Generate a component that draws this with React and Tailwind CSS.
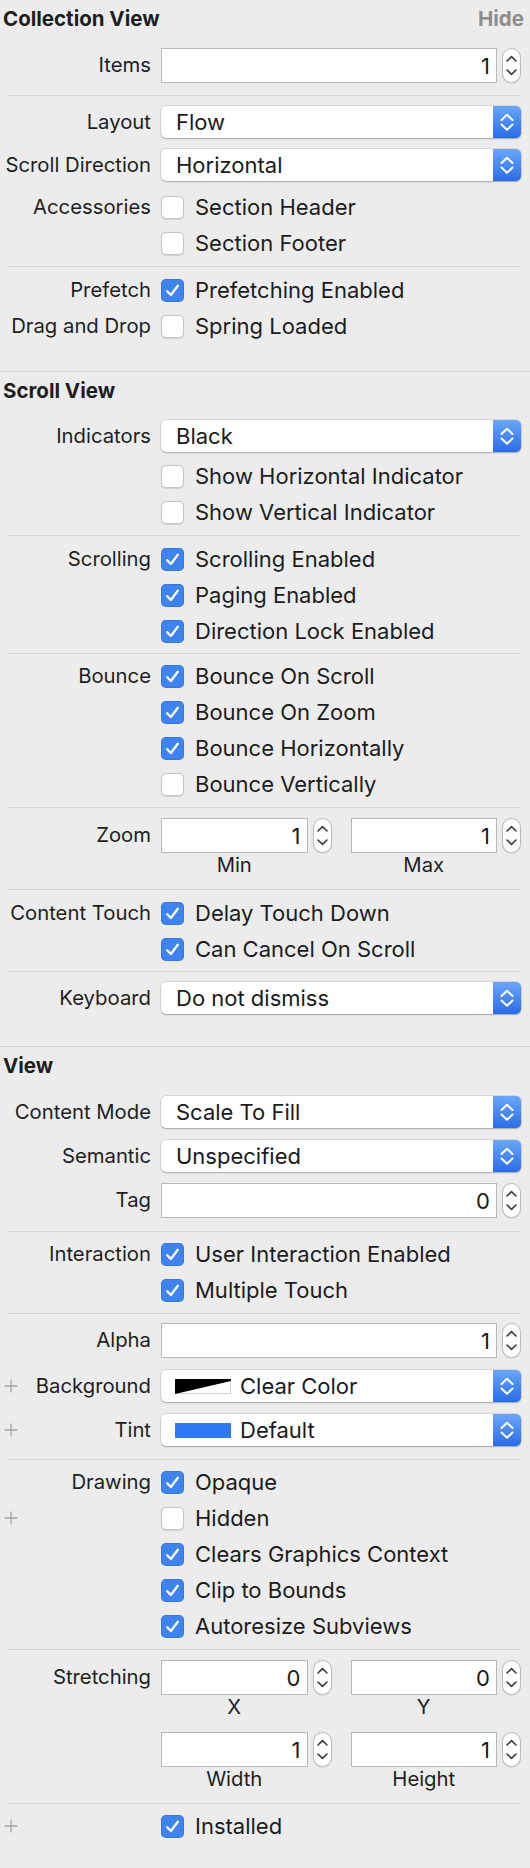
import React from "react";

const FONT = "font-['Inter','Liberation_Sans',sans-serif]";

function Check() {
  return (
    <svg width="23" height="23" viewBox="0 0 23 23" className="block">
      <path d="M6.2 12.2 L9.9 16 L16.8 6.8" fill="none" stroke="#ffffff" strokeWidth="2.3" strokeLinecap="round" strokeLinejoin="round" />
    </svg>
  );
}

function Checkbox({ checked }) {
  return checked ? (
    <div className="w-[23px] h-[23px] rounded-[5px] bg-[#3f83ef] shrink-0 shadow-[inset_0_0_0_0.5px_rgba(0,60,170,0.35)]">
      <Check />
    </div>
  ) : (
    <div className="w-[23px] h-[23px] rounded-[5px] bg-white border border-[#c6c6c6] shrink-0 shadow-[0_0.5px_1px_rgba(0,0,0,0.12)]" />
  );
}

function Plus() {
  return (
    <svg width="14" height="14" viewBox="0 0 14 14" className="block shrink-0">
      <path d="M7 0.5 V13.5 M0.5 7 H13.5" stroke="#a3a3a3" strokeWidth="1.3" />
    </svg>
  );
}

function Label({ children, plus }) {
  return (
    <div className="w-[151px] shrink-0 flex items-center">
      {plus ? (
        <div className="ml-[4px]">
          <Plus />
        </div>
      ) : null}
      <div className="flex-1 text-right text-[20.3px] leading-none text-[#1e1e1e] whitespace-nowrap">{children}</div>
    </div>
  );
}

function Sep({ className = "" }) {
  return <div className={"h-px bg-[#d4d4d4] ml-[8px] mr-[10px] " + className} />;
}

function FullSep({ className = "" }) {
  return <div className={"h-px bg-[#d2d2d2] " + className} />;
}

function Title({ children, hide }) {
  return (
    <div className="h-[38px] flex items-center justify-between pl-[3px] pr-[6px]">
      <span className="text-[20.5px] font-bold text-[#1e1e1e] leading-none">{children}</span>
      {hide ? <span className="text-[20.5px] font-bold text-[#8d8d8d] leading-none">Hide</span> : null}
    </div>
  );
}

function CheckRow({ label, plus, checked, text, className = "" }) {
  return (
    <div className={"h-[36px] flex items-center " + className}>
      <Label plus={plus}>{label}</Label>
      <div className="ml-[10px] flex items-center">
        <Checkbox checked={checked} />
        <span className="ml-[11px] text-[22px] leading-none text-[#1c1c1c] whitespace-nowrap">{text}</span>
      </div>
    </div>
  );
}

function PopupArrows() {
  return (
    <svg width="28" height="32" viewBox="0 0 28 32" className="block">
      <path d="M8.5 14 L14 8.8 L19.5 14" fill="none" stroke="#ffffff" strokeWidth="2" strokeLinecap="round" strokeLinejoin="round" />
      <path d="M8.5 18.5 L14 23.7 L19.5 18.5" fill="none" stroke="#ffffff" strokeWidth="2" strokeLinecap="round" strokeLinejoin="round" />
    </svg>
  );
}

function Popup({ children }) {
  return (
    <div className="h-[32px] flex-1 flex rounded-[5px] bg-white overflow-hidden shadow-[0_0_0_0.5px_rgba(0,0,0,0.18),0_1px_1.5px_rgba(0,0,0,0.22)]">
      <div className="flex-1 flex items-center pl-[15px] text-[22px] leading-none text-[#1a1a1a] whitespace-nowrap">{children}</div>
      <div className="w-[28px] h-full bg-linear-to-b from-[#6aa7fa] to-[#2a6ce5]">
        <PopupArrows />
      </div>
    </div>
  );
}

function PopupRow({ label, plus, children, className = "" }) {
  return (
    <div className={"flex items-center pr-[9px] " + className}>
      <Label plus={plus}>{label}</Label>
      <div className="ml-[10px] flex-1 flex">
        <Popup>{children}</Popup>
      </div>
    </div>
  );
}

function Stepper() {
  return (
    <div className="w-[19px] h-[35px] ml-[5px] shrink-0 rounded-full bg-white border border-[#bdbdbd] shadow-[0_0.5px_1px_rgba(0,0,0,0.15)]">
      <svg width="17" height="33" viewBox="0 0 17 33" className="block">
        <path d="M4 12 L8.5 7.6 L13 12" fill="none" stroke="#3a3a3a" strokeWidth="1.6" strokeLinecap="round" strokeLinejoin="round" />
        <path d="M4 21 L8.5 25.4 L13 21" fill="none" stroke="#3a3a3a" strokeWidth="1.6" strokeLinecap="round" strokeLinejoin="round" />
      </svg>
    </div>
  );
}

function NumField({ value }) {
  return (
    <div className="flex-1 flex items-center">
      <div className="flex-1 h-[35px] bg-white border border-[#b8b8b8] flex items-center justify-end pr-[6px] text-[22px] leading-none text-[#1a1a1a]">
        {value}
      </div>
      <Stepper />
    </div>
  );
}

function InputRow({ label, value, className = "" }) {
  return (
    <div className={"flex items-center pr-[9px] " + className}>
      <Label>{label}</Label>
      <div className="ml-[10px] flex-1 flex">
        <NumField value={value} />
      </div>
    </div>
  );
}

function DualRow({ label, a, b, la, lb, className = "" }) {
  return (
    <div className={"flex pr-[9px] " + className}>
      <div className="h-[35px] flex items-center">
        <Label>{label}</Label>
      </div>
      <div className="ml-[10px] flex-1 grid grid-cols-2 gap-x-[19px]">
        <div>
          <NumField value={a} />
          <div className="h-[25px] flex items-center justify-center pr-[24px] text-[20.3px] leading-none text-[#1e1e1e]">{la}</div>
        </div>
        <div>
          <NumField value={b} />
          <div className="h-[25px] flex items-center justify-center pr-[24px] text-[20.3px] leading-none text-[#1e1e1e]">{lb}</div>
        </div>
      </div>
    </div>
  );
}

function ClearSwatch() {
  return (
    <svg width="56" height="15" viewBox="0 0 56 15" className="block shrink-0">
      <rect x="0.5" y="0.5" width="55" height="14" fill="#ffffff" stroke="#d0d0d0" strokeWidth="1" />
      <polygon points="0,0 56,0 56,2 0,15" fill="#000000" />
    </svg>
  );
}

function TintSwatch() {
  return <div className="w-[56px] h-[15px] shrink-0 bg-[#2f7af4]" />;
}

export default function App() {
  return (
    <div className={"w-[530px] min-h-[1868px] bg-[#ececec] " + FONT}>
      {/* Collection View */}
      <Title hide>Collection View</Title>
      <InputRow label="Items" value="1" className="mt-[10px]" />
      <Sep className="mt-[12px]" />
      <PopupRow label="Layout" className="mt-[10px]">Flow</PopupRow>
      <PopupRow label="Scroll Direction" className="mt-[11px]">Horizontal</PopupRow>
      <CheckRow label="Accessories" text="Section Header" className="mt-[8px]" />
      <CheckRow label="" text="Section Footer" />
      <Sep className="mt-[5px]" />
      <CheckRow label="Prefetch" checked text="Prefetching Enabled" className="mt-[5px]" />
      <CheckRow label="Drag and Drop" text="Spring Loaded" />
      <FullSep className="mt-[27px]" />

      {/* Scroll View */}
      <Title>Scroll View</Title>
      <PopupRow label="Indicators" className="mt-[10px]">Black</PopupRow>
      <CheckRow label="" text="Show Horizontal Indicator" className="mt-[6px]" />
      <CheckRow label="" text="Show Vertical Indicator" />
      <Sep className="mt-[5px]" />
      <CheckRow label="Scrolling" checked text="Scrolling Enabled" className="mt-[5px]" />
      <CheckRow label="" checked text="Paging Enabled" />
      <CheckRow label="" checked text="Direction Lock Enabled" />
      <Sep className="mt-[4px]" />
      <CheckRow label="Bounce" checked text="Bounce On Scroll" className="mt-[4px]" />
      <CheckRow label="" checked text="Bounce On Zoom" />
      <CheckRow label="" checked text="Bounce Horizontally" />
      <CheckRow label="" text="Bounce Vertically" />
      <Sep className="mt-[5px]" />
      <DualRow label="Zoom" a="1" b="1" la="Min" lb="Max" className="mt-[10px]" />
      <Sep className="mt-[11px]" />
      <CheckRow label="Content Touch" checked text="Delay Touch Down" className="mt-[5px]" />
      <CheckRow label="" checked text="Can Cancel On Scroll" />
      <Sep className="mt-[4px]" />
      <PopupRow label="Keyboard" className="mt-[10px]">Do not dismiss</PopupRow>
      <FullSep className="mt-[32px]" />

      {/* View */}
      <Title>View</Title>
      <PopupRow label="Content Mode" className="mt-[11px]">Scale To Fill</PopupRow>
      <PopupRow label="Semantic" className="mt-[12px]">Unspecified</PopupRow>
      <InputRow label="Tag" value="0" className="mt-[11px]" />
      <Sep className="mt-[13px]" />
      <CheckRow label="Interaction" checked text="User Interaction Enabled" className="mt-[4px]" />
      <CheckRow label="" checked text="Multiple Touch" />
      <Sep className="mt-[5px]" />
      <InputRow label="Alpha" value="1" className="mt-[9px]" />
      <PopupRow label="Background" plus className="mt-[12px]">
        <span className="flex items-center">
          <span className="-ml-[1px]"><ClearSwatch /></span>
          <span className="ml-[9px]">Clear Color</span>
        </span>
      </PopupRow>
      <PopupRow label="Tint" plus className="mt-[12px]">
        <span className="flex items-center">
          <span className="-ml-[1px]"><TintSwatch /></span>
          <span className="ml-[9px]">Default</span>
        </span>
      </PopupRow>
      <Sep className="mt-[13px]" />
      <CheckRow label="Drawing" checked text="Opaque" className="mt-[4px]" />
      <CheckRow label="" plus text="Hidden" />
      <CheckRow label="" checked text="Clears Graphics Context" />
      <CheckRow label="" checked text="Clip to Bounds" />
      <CheckRow label="" checked text="Autoresize Subviews" />
      <Sep className="mt-[5px]" />
      <DualRow label="Stretching" a="0" b="0" la="X" lb="Y" className="mt-[10px]" />
      <DualRow label="" a="1" b="1" la="Width" lb="Height" className="mt-[12px]" />
      <Sep className="mt-[11px]" />
      <CheckRow label="" plus checked text="Installed" className="mt-[4px]" />
    </div>
  );
}
